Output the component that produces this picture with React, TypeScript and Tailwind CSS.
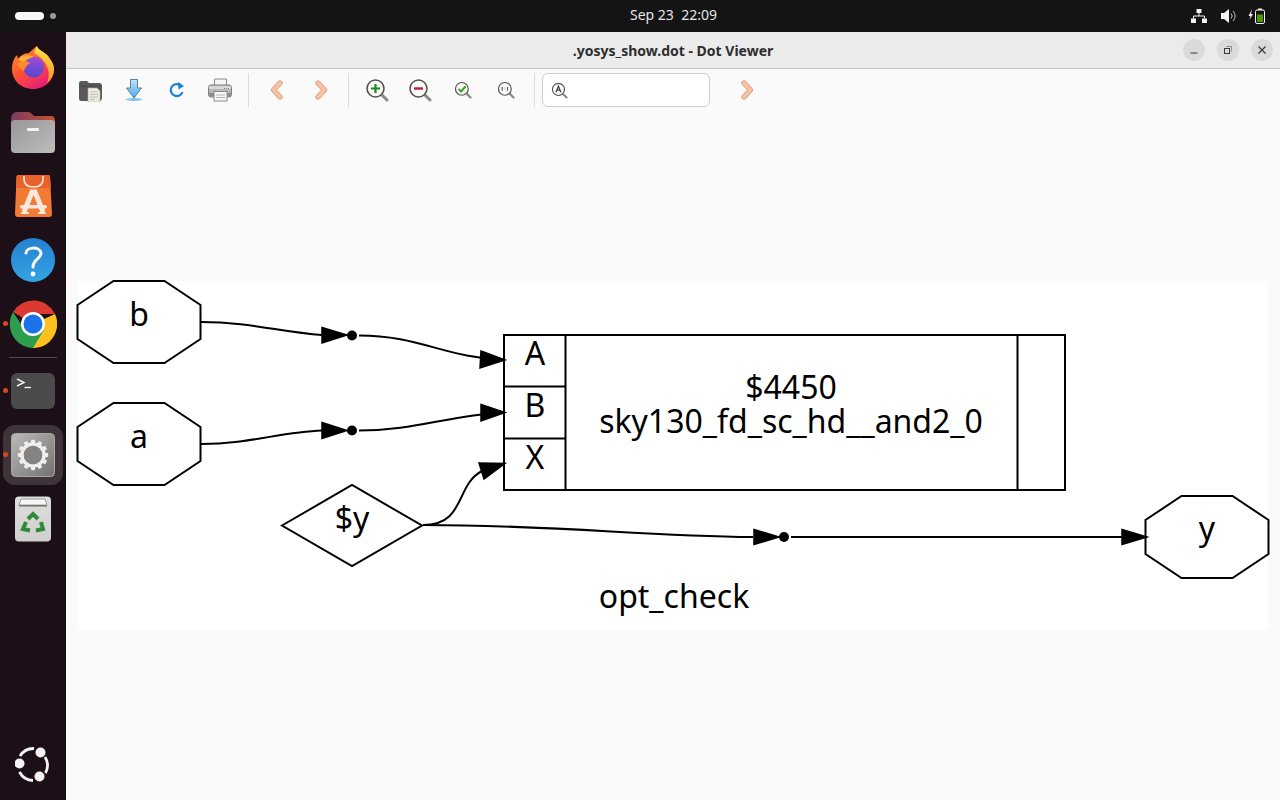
import React from "react";

const FONT = "font-['Noto_Sans','Open_Sans',sans-serif]";

function Firefox() {
  return (
    <svg width="42" height="43" viewBox="0 0 42 43">
      <defs>
        <linearGradient id="ffa" x1="0" y1="0" x2="0.6" y2="1">
          <stop offset="0" stopColor="#ff9a2c" />
          <stop offset="0.55" stopColor="#ff5232" />
          <stop offset="1" stopColor="#e61f78" />
        </linearGradient>
        <linearGradient id="ffb" x1="0" y1="0" x2="0" y2="1">
          <stop offset="0" stopColor="#ffe34e" />
          <stop offset="1" stopColor="#ff9420" />
        </linearGradient>
        <linearGradient id="ffc" x1="0" y1="0" x2="0" y2="1">
          <stop offset="0" stopColor="#a24ad6" />
          <stop offset="1" stopColor="#5548cf" />
        </linearGradient>
      </defs>
      <path d="M25 0 C26 5 35 6 38 13 C41 17 42 20 42 23 C42 34 33 43 21 43 C9 43 0 34 0 23 C0 17 2 12 5 9 L6 13 C8 10 12 7 17 7 C20 4 22 2 25 0Z" fill="url(#ffa)" />
      <path d="M22 7 C23 4 24 2 25 0 C26 5 35 6 38 13 C41 17 42 20 42 23 C42 29 39 34 35 37 C38 30 37 23 33 17 C30 12 26 9 22 7Z" fill="url(#ffb)" />
      <circle cx="21.5" cy="21" r="10.5" fill="url(#ffc)" />
      <path d="M6 13 C10 9 17 8 22 11 C18 12 15 13 13 16 C10 16 8 15 6 13Z" fill="#ffb02e" />
      <path d="M5 18 C9 15 15 15 18 17 C15 19 13 21 12 25 C9 24 6 21 5 18Z" fill="#ff8a2c" />
    </svg>
  );
}

function Files() {
  return (
    <svg width="44" height="41" viewBox="0 0 44 41">
      <defs>
        <linearGradient id="fa" x1="0" y1="0" x2="1" y2="0">
          <stop offset="0" stopColor="#7a3a62" />
          <stop offset="1" stopColor="#c8542e" />
        </linearGradient>
        <linearGradient id="fb" x1="0" y1="0" x2="1" y2="1">
          <stop offset="0" stopColor="#979797" />
          <stop offset="1" stopColor="#bdbdbd" />
        </linearGradient>
      </defs>
      <path d="M0 8 Q0 0 6 0 H17 Q20 0 22 3 L23 4 H40 Q44 4 44 9 V20 H0Z" fill="url(#fa)" />
      <rect x="0" y="8" width="44" height="33" rx="4" fill="url(#fb)" />
      <rect x="16" y="16" width="12" height="3" rx="1" fill="#f2f2f2" />
    </svg>
  );
}

function Store() {
  return (
    <svg width="37" height="42" viewBox="0 0 37 42">
      <path d="M3.5 0 H33 Q35 0 35 2 L37 39 Q37 42 34 42 H3 Q0 42 0 39 L1.5 2 Q1.5 0 3.5 0Z" fill="#f27a34" />
      <path d="M1 13 H36 L35 2 Q35 0 33 0 H3.5 Q1.5 0 1.5 2Z" fill="#e9622a" />
      <path d="M9 1 V4 Q9 12 18.5 12 Q28 12 28 4 V1" fill="none" stroke="#fbe8dc" strokeWidth="1.6" />
      <path d="M9 37 L17 17 H20 L28 37" fill="none" stroke="#fbe8dc" strokeWidth="5" />
      <rect x="5" y="30" width="27" height="3.5" rx="1.5" fill="#fbe8dc" />
      <rect x="6" y="37" width="8" height="2" rx="1" fill="#fbe8dc" />
      <rect x="23" y="37" width="8" height="2" rx="1" fill="#fbe8dc" />
    </svg>
  );
}

function Help() {
  return (
    <svg width="44" height="44" viewBox="0 0 44 44">
      <defs>
        <linearGradient id="ha" x1="0" y1="0" x2="0" y2="1">
          <stop offset="0" stopColor="#2580d0" />
          <stop offset="1" stopColor="#33a4e4" />
        </linearGradient>
      </defs>
      <circle cx="22" cy="22" r="22" fill="url(#ha)" />
      <path d="M15 15 C15 9 29 8 30 15 C30 21 22 21 22 29" fill="none" stroke="#fff" strokeWidth="3" strokeLinecap="round" />
      <circle cx="22" cy="36" r="2.4" fill="#fff" />
    </svg>
  );
}

function Chrome() {
  return (
    <svg width="48" height="48" viewBox="0 0 48 48">
      <path d="M24 24 L4 12 A24 24 0 0 1 46 14 L24 14Z" fill="#db3a32" />
      <path d="M24 24 L46 14 A24 24 0 0 1 24 48Z" fill="#fcc11e" />
      <path d="M24 48 A24 24 0 0 1 4 12 L16 30 L35 30 L24 48Z" fill="#2e9e4e" />
      <circle cx="24" cy="24" r="12" fill="#fff" />
      <circle cx="24" cy="24" r="9.5" fill="#1a73e8" />
    </svg>
  );
}

function Terminal() {
  return (
    <div className="relative w-[44px] h-[36px] rounded-[6px] bg-[#4a4a4a]">
      <svg width="44" height="36" viewBox="0 0 44 36" className="absolute left-0 top-0">
        <path d="M6 6 L13 9.5 L6 13" fill="none" stroke="#f2f2f2" strokeWidth="1.4" />
        <path d="M13.5 14.5 H20" stroke="#f2f2f2" strokeWidth="1.4" />
      </svg>
    </div>
  );
}

function Settings() {
  const teeth = Array.from({ length: 12 }, (_, i) => i * 30);
  return (
    <svg width="44" height="44" viewBox="0 0 44 44">
      <defs>
        <linearGradient id="sa" x1="0" y1="0" x2="1" y2="1">
          <stop offset="0" stopColor="#bcbab8" />
          <stop offset="1" stopColor="#747270" />
        </linearGradient>
      </defs>
      <rect x="0.5" y="0.5" width="43" height="43" rx="4" fill="url(#sa)" stroke="#a8a6a4" />
      {teeth.map((a) => (
        <rect key={a} x="20" y="6.8" width="4" height="6" rx="1" fill="#efeeec" transform={`rotate(${a} 22 22)`} />
      ))}
      <circle cx="22" cy="22" r="11" fill="none" stroke="#efeeec" strokeWidth="3.6" />
      <circle cx="22" cy="22" r="9.3" fill="#858381" />
    </svg>
  );
}

function Trash() {
  return (
    <svg width="38" height="46" viewBox="0 0 38 46">
      <defs>
        <linearGradient id="ta" x1="0" y1="0" x2="0" y2="1">
          <stop offset="0" stopColor="#dededc" />
          <stop offset="1" stopColor="#cfcfcd" />
        </linearGradient>
      </defs>
      <rect x="1" y="0.5" width="36" height="45" rx="4" fill="url(#ta)" />
      <path d="M5 9 L7 3 H31 L33 9 Z" fill="#f6f6f4" stroke="#8a8a88" strokeWidth="0.8" />
      <rect x="5" y="9" width="28" height="1.6" fill="#77777a" />
      <g fill="none" stroke="#2f8a3a" strokeWidth="4">
        <path d="M14 23 L19 18 L24 23" />
        <path d="M27 26 L29 33 L22 34.5" />
        <path d="M16 34.5 L9 33 L12 26" />
      </g>
    </svg>
  );
}

function Ubuntu() {
  return (
    <svg width="36" height="36" viewBox="0 0 36 36">
      <g fill="none" stroke="#f4f4f4" strokeWidth="2.8">
        <path d="M5 9 A16 16 0 0 1 19 1.5" />
        <path d="M30 10 A16 16 0 0 1 30.5 26" />
        <path d="M4.5 25 A16 16 0 0 0 18 33.5" />
      </g>
      <circle cx="4.5" cy="16.5" r="5" fill="#f4f4f4" />
      <circle cx="25.5" cy="5.5" r="5" fill="#f4f4f4" />
      <circle cx="24.5" cy="29.5" r="5" fill="#f4f4f4" />
    </svg>
  );
}

function DockItem({ children, dot, active }: { children: React.ReactNode; dot?: boolean; active?: boolean }) {
  return (
    <div className="relative h-[64px] w-[66px] flex items-center justify-center">
      {active && <div className="absolute left-[3px] top-[2px] w-[60px] h-[60px] rounded-[12px] bg-[#3f343a]" />}
      {dot && <div className="absolute left-[3px] top-[29px] w-[5px] h-[5px] rounded-full bg-[#d9481c]" />}
      <div className="relative flex items-center justify-center">{children}</div>
    </div>
  );
}

function Dock() {
  return (
    <aside className="w-[66px] shrink-0 h-full bg-[#1c0f18] flex flex-col items-center pt-[4px] relative">
      <DockItem><div className="mb-[1px]"><Firefox /></div></DockItem>
      <DockItem><Files /></DockItem>
      <DockItem><Store /></DockItem>
      <DockItem><Help /></DockItem>
      <DockItem dot><Chrome /></DockItem>
      <div className="w-[48px] h-px bg-[#52484e] mt-[1px] mb-[1px]" />
      <DockItem dot><Terminal /></DockItem>
      <DockItem dot active><Settings /></DockItem>
      <DockItem><Trash /></DockItem>
      <div className="mt-auto mb-[17px]"><Ubuntu /></div>
    </aside>
  );
}

function TopBar() {
  return (
    <header className={`h-[32px] bg-[#141414] flex items-center justify-between relative text-[#e4e4e4] ${FONT}`}>
      <div className="flex items-center pl-[15px] gap-[6px]">
        <div className="w-[29px] h-[8px] rounded-full bg-[#f6f6f6]" />
        <div className="w-[6px] h-[6px] rounded-full bg-[#9a9a9a]" />
      </div>
      <div className="absolute left-[630px] top-[6px] text-[14px] leading-[18px] whitespace-pre">Sep 23  22:09</div>
      <div className="flex items-center pr-[15px] h-full">
        <svg width="16" height="14" viewBox="0 0 16 14" className="mr-[14px]">
          <path d="M5.5 0 H10.5 V4 H5.5Z M0 9.5 H5 V14 H0Z M11 9.5 H16 V14 H11Z" fill="#f2f2f2" />
          <path d="M8 4 V7 M2.5 9.5 V7 H13.5 V9.5" fill="none" stroke="#f2f2f2" strokeWidth="1" />
        </svg>
        <svg width="15" height="16" viewBox="0 0 15 16" className="mr-[12px]">
          <path d="M0 5 H3 L8 1 V15 L3 11 H0Z" fill="#f2f2f2" />
          <path d="M10 5.5 A3.5 3.5 0 0 1 10 10.5 M12 3 A7 7 0 0 1 12 13" fill="none" stroke="#bdbdbd" strokeWidth="1" />
        </svg>
        <svg width="17" height="16" viewBox="0 0 17 16">
          <path d="M4 1 L0.5 8 H2.5 L1.5 12 L5 6 H3Z" fill="#f2f2f2" />
          <rect x="7.5" y="2" width="9" height="13.5" rx="1.5" fill="none" stroke="#f2f2f2" strokeWidth="1" />
          <rect x="10" y="0.5" width="4" height="1.5" fill="#f2f2f2" />
          <rect x="9" y="6.5" width="6" height="7.5" fill="#4e9a06" />
        </svg>
      </div>
    </header>
  );
}

function WinButton({ children }: { children: React.ReactNode }) {
  return (
    <div className="w-[22px] h-[22px] rounded-full bg-[#dadada] flex items-center justify-center relative">
      {children}
    </div>
  );
}

function TitleBar() {
  return (
    <div className={`h-[37px] bg-[#ebebeb] border-b border-[#c4c4c4] relative flex items-center justify-end pr-[7px] gap-[12px] ${FONT}`}>
      <div className="absolute inset-0 flex items-center justify-center text-[14px] font-bold text-[#2e2e2e]">
        .yosys_show.dot - Dot Viewer
      </div>
      <WinButton>
        <svg width="10" height="10" viewBox="0 0 10 10"><path d="M1.5 8 H8.5" stroke="#3a3a3a" strokeWidth="1" /></svg>
      </WinButton>
      <WinButton>
        <svg width="10" height="10" viewBox="0 0 10 10">
          <rect x="1.5" y="3.5" width="5" height="5" fill="none" stroke="#3a3a3a" />
          <path d="M3.5 1.5 H8.5 V6.5" fill="none" stroke="#8a8a8a" />
        </svg>
      </WinButton>
      <WinButton>
        <svg width="10" height="10" viewBox="0 0 10 10"><path d="M1.5 1.5 L8.5 8.5 M8.5 1.5 L1.5 8.5" stroke="#3a3a3a" strokeWidth="1.2" /></svg>
      </WinButton>
    </div>
  );
}

function IconOpen() {
  return (
    <svg width="24" height="24" viewBox="0 0 24 24">
      <path d="M1 6 Q1 3 3 3 H9 L11 5 H21 Q24 5 24 8 V20 Q24 23 21 23 H3 Q1 23 1 20Z" fill="#5a5a5a" />
      <path d="M1 8 H24" stroke="#3c3c3c" strokeWidth="0.8" />
      <path d="M10 10 H19 L22 13 V24 H10Z" fill="#ecebe6" stroke="#aeaca4" strokeWidth="0.6" />
      <path d="M12 14 H20 M12 16.5 H20 M12 19 H20 M12 21.5 H17" stroke="#b5b3a8" strokeWidth="0.8" />
    </svg>
  );
}

function IconSave() {
  return (
    <svg width="20" height="24" viewBox="0 0 20 24">
      <defs>
        <linearGradient id="sv" x1="0" y1="0" x2="0" y2="1">
          <stop offset="0" stopColor="#bfe3f8" />
          <stop offset="1" stopColor="#4aa8ec" />
        </linearGradient>
      </defs>
      <path d="M6.5 1.5 H13.5 V10 H17.5 L10 20 L2.5 10 H6.5Z" fill="url(#sv)" stroke="#5d7f96" strokeWidth="1" />
      <ellipse cx="10" cy="21.5" rx="8" ry="1.5" fill="#7cc4f2" />
    </svg>
  );
}

function IconRefresh() {
  return (
    <svg width="18" height="18" viewBox="0 0 18 18">
      <path d="M14.5 11 A6 6 0 1 1 12 4" fill="none" stroke="#1f7fdc" strokeWidth="2.2" />
      <path d="M10 1 L16 5 L10.5 8.5Z" fill="#1f7fdc" />
    </svg>
  );
}

function IconPrint() {
  return (
    <svg width="24" height="24" viewBox="0 0 24 24">
      <path d="M6.5 1 H18.5 V8 H6.5Z" fill="#f6f6f6" stroke="#8a8a8a" />
      <rect x="0.5" y="7" width="23" height="12" rx="2.5" fill="#b8b8b8" stroke="#7c7c7c" />
      <rect x="1" y="8" width="22" height="3" fill="#d8d8d8" />
      <path d="M1 15 H23 V18 H1Z" fill="#8c8c8c" />
      <path d="M16 10.5 H17 M18 10.5 H19 M20 10.5 H21" stroke="#c86a5a" />
      <rect x="6" y="13.5" width="13" height="9.5" fill="#f7f7f7" stroke="#8a8a8a" />
      <path d="M8 17 H17 M8 19.5 H17" stroke="#b0b0b0" />
    </svg>
  );
}

function Chevron({ right }: { right?: boolean }) {
  const d = right ? "M4 3 L10.5 10 L4 17" : "M10 3 L3.5 10 L10 17";
  return (
    <svg width="14" height="20" viewBox="0 0 14 20">
      <path d={d} fill="none" stroke="#e0a484" strokeWidth="5.4" strokeLinejoin="round" strokeLinecap="round" />
      <path d={d} fill="none" stroke="#f5c3a6" strokeWidth="3.4" strokeLinejoin="round" strokeLinecap="round" />
    </svg>
  );
}

function Mag({ size, r, children }: { size: number; r: number; children?: React.ReactNode }) {
  return (
    <svg width={size} height={size} viewBox="0 0 24 24">
      <path d="M16.5 16.5 L22 22" stroke="#8a8a86" strokeWidth="3" strokeLinecap="round" />
      <circle cx="10.5" cy="10.5" r={r} fill="#fbfbfa" stroke="#55554f" strokeWidth="1.6" />
      {children}
    </svg>
  );
}

function Sep() {
  return <div className="w-px h-[34px] bg-[#dcdcdc]" />;
}

function ToolBtn({ children, w = "w-[43px]" }: { children: React.ReactNode; w?: string }) {
  return <div className={`${w} h-[34px] flex items-center justify-center`}>{children}</div>;
}

function Toolbar() {
  return (
    <div className="h-[42px] flex items-center pl-[2px] shrink-0">
      <ToolBtn w="w-[44px]"><IconOpen /></ToolBtn>
      <ToolBtn><IconSave /></ToolBtn>
      <ToolBtn><IconRefresh /></ToolBtn>
      <ToolBtn><IconPrint /></ToolBtn>
      <div className="ml-[7px] mr-[6px]"><Sep /></div>
      <ToolBtn><Chevron /></ToolBtn>
      <ToolBtn w="w-[45px]"><Chevron right /></ToolBtn>
      <div className="ml-[5px] mr-[6px]"><Sep /></div>
      <ToolBtn>
        <Mag size={24} r={8.5}>
          <path d="M10.5 6 V15 M6 10.5 H15" stroke="#1c8a22" strokeWidth="2.2" />
        </Mag>
      </ToolBtn>
      <ToolBtn>
        <Mag size={24} r={8.5}>
          <path d="M6 10.5 H15" stroke="#c4183c" strokeWidth="2.4" />
        </Mag>
      </ToolBtn>
      <ToolBtn>
        <Mag size={18} r={8.5}>
          <path d="M6 10.5 L9.5 14 L15.5 7" fill="none" stroke="#3aa02a" strokeWidth="2.6" />
        </Mag>
      </ToolBtn>
      <ToolBtn>
        <Mag size={18} r={8.5}>
          <path d="M7 8 V13 M14 8 V13 M10.5 9 V9.6 M10.5 11.5 V12.1" stroke="#55554f" strokeWidth="1.5" />
        </Mag>
      </ToolBtn>
      <div className="ml-[7px] mr-[7px]"><Sep /></div>
      <div className="w-[168px] h-[34px] rounded-[6px] bg-white border border-[#cdcdcd] flex items-center pl-[8px]">
        <Mag size={17} r={8.5}>
          <path d="M7 14.5 L10.5 6 L14 14.5 M8.4 11.5 H12.6" fill="none" stroke="#44443f" strokeWidth="1.8" />
        </Mag>
      </div>
      <div className="ml-[30px]"><Chevron right /></div>
    </div>
  );
}

function Octagon({ cx, cy, label, dy }: { cx: number; cy: number; label: string; dy: number }) {
  const pts = [
    [cx - 25.5, cy - 41],
    [cx + 25.5, cy - 41],
    [cx + 61.5, cy - 17],
    [cx + 61.5, cy + 17],
    [cx + 25.5, cy + 41],
    [cx - 25.5, cy + 41],
    [cx - 61.5, cy + 17],
    [cx - 61.5, cy - 17],
  ]
    .map((p) => p.join(","))
    .join(" ");
  return (
    <g>
      <polygon points={pts} fill="none" stroke="#000" strokeWidth="2" />
      <text x={cx} y={cy + dy} textAnchor="middle" fontSize="32" fill="#000">{label}</text>
    </g>
  );
}

function Arrow({ points }: { points: string }) {
  return <polygon points={points} fill="#000" stroke="#000" strokeWidth="1.5" />;
}

function Graph() {
  return (
    <div className="mt-[170px] ml-[12px] mr-[12px] h-[349px] bg-white relative">
      <svg
        width="1190"
        height="349"
        viewBox="78 281 1190 349"
        style={{ fontFamily: "'Noto Sans','Open Sans',sans-serif" }}
        className="block overflow-visible"
      >
        <Octagon cx={139} cy={322} label="b" dy={4} />
        <Octagon cx={139} cy={444} label="a" dy={4} />
        <Octagon cx={1207} cy={537} label="y" dy={3} />

        <polygon points="282,525.5 352,485 422,525.5 352,566" fill="none" stroke="#000" strokeWidth="2" />
        <text x="352" y="530" textAnchor="middle" fontSize="32">$y</text>

        <g fill="none" stroke="#000" strokeWidth="2">
          <path d="M201 322 C250 322 280 332 322 335" />
          <path d="M359 335.5 C420 335.5 445 358 505 360" />
          <path d="M201 444 C250 444 280 432 322 430.5" />
          <path d="M359 430.5 C415 430.5 450 415 505 412.5" />
          <path d="M423 525 C466 525 455 485 482 471" />
          <path d="M423 525 C560 525 640 536 753 537" />
          <path d="M791 537 H1146" />
        </g>
        <Arrow points="322,327.5 347,335 322,343" />
        <Arrow points="481,351 505,360 480,368" />
        <Arrow points="322,422.5 347,430.5 322,438.5" />
        <Arrow points="481,404.5 505,412.5 481,421" />
        <Arrow points="479,463 505,463.5 484,479" />
        <Arrow points="754,529.5 779,537 754,544.5" />
        <Arrow points="1122,529.5 1147,537 1122,544.5" />
        <circle cx="352" cy="335.5" r="5" fill="#000" />
        <circle cx="352" cy="430.5" r="5" fill="#000" />
        <circle cx="784" cy="537" r="5" fill="#000" />

        <g fill="none" stroke="#000" strokeWidth="2">
          <rect x="504" y="335" width="561" height="155" />
          <path d="M565.5 335 V490 M1017.5 335 V490 M504 386.5 H565.5 M504 438.5 H565.5" />
        </g>
        <text x="535" y="365" textAnchor="middle" fontSize="32">A</text>
        <text x="535" y="417" textAnchor="middle" fontSize="32">B</text>
        <text x="535" y="469" textAnchor="middle" fontSize="32">X</text>
        <text x="791" y="399" textAnchor="middle" fontSize="32">$4450</text>
        <text x="791" y="433" textAnchor="middle" fontSize="32">sky130_fd_sc_hd__and2_0</text>
        <text x="674" y="608" textAnchor="middle" fontSize="32">opt_check</text>
      </svg>
    </div>
  );
}

export default function App() {
  return (
    <div className="w-[1280px] h-[800px] overflow-hidden flex flex-col bg-[#fafafa]">
      <TopBar />
      <div className="flex flex-1 min-h-0">
        <Dock />
        <main className="flex-1 min-w-0 flex flex-col">
          <TitleBar />
          <Toolbar />
          <Graph />
        </main>
      </div>
    </div>
  );
}
